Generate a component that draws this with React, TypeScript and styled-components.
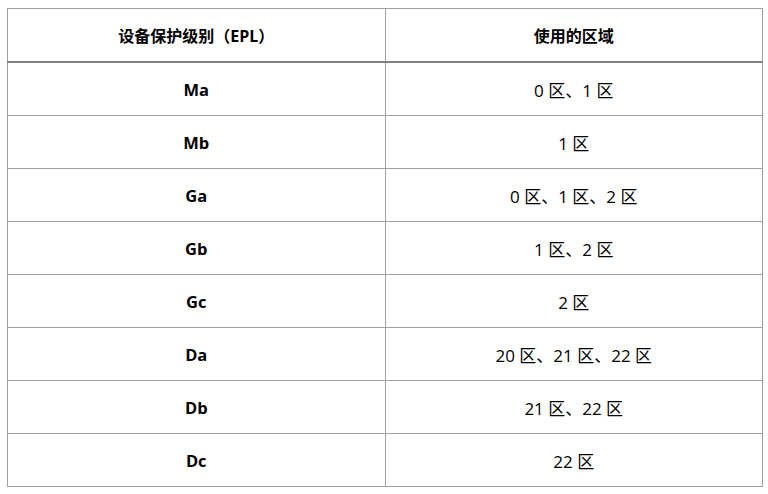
import React from "react";
import styled, { createGlobalStyle } from "styled-components";

const GlobalStyle = createGlobalStyle`
  body {
    margin: 8px 0 0 7px;
    background: #fff;
    font-family: "Open Sans", "Noto Sans CJK SC", sans-serif;
    color: #000;
  }
`;

type Row = {
  epl: string;
  zones: string;
};

const rows: Row[] = [
  { epl: "Ma", zones: "0 区、1 区" },
  { epl: "Mb", zones: "1 区" },
  { epl: "Ga", zones: "0 区、1 区、2 区" },
  { epl: "Gb", zones: "1 区、2 区" },
  { epl: "Gc", zones: "2 区" },
  { epl: "Da", zones: "20 区、21 区、22 区" },
  { epl: "Db", zones: "21 区、22 区" },
  { epl: "Dc", zones: "22 区" },
];

const App: React.FC = () => {
  return (
    <>
      <GlobalStyle />
      <Table>
        <thead>
          <tr>
            <HeadCell>设备保护级别（EPL）</HeadCell>
            <HeadCell>使用的区域</HeadCell>
          </tr>
        </thead>
        <tbody>
          {rows.map((row) => (
            <tr key={row.epl}>
              <Cell bold>{row.epl}</Cell>
              <Cell>{row.zones}</Cell>
            </tr>
          ))}
        </tbody>
      </Table>
    </>
  );
};

export default App;

const Table = styled.table`
  width: 756px;
  border-collapse: collapse;
  table-layout: fixed;
`;

const HeadCell = styled.th`
  height: 52px;
  padding: 0;
  border: 1px solid #a0a0a0;
  border-bottom: 2px solid #808080;
  font-size: 16px;
  font-weight: 700;
  text-align: center;
`;

const Cell = styled.td<{ bold?: boolean }>`
  height: 52px;
  padding: 0;
  border: 1px solid #a0a0a0;
  font-size: ${(p) => (p.bold ? "16.5px" : "17px")};
  font-weight: ${(p) => (p.bold ? 700 : 400)};
  text-align: center;
`;
